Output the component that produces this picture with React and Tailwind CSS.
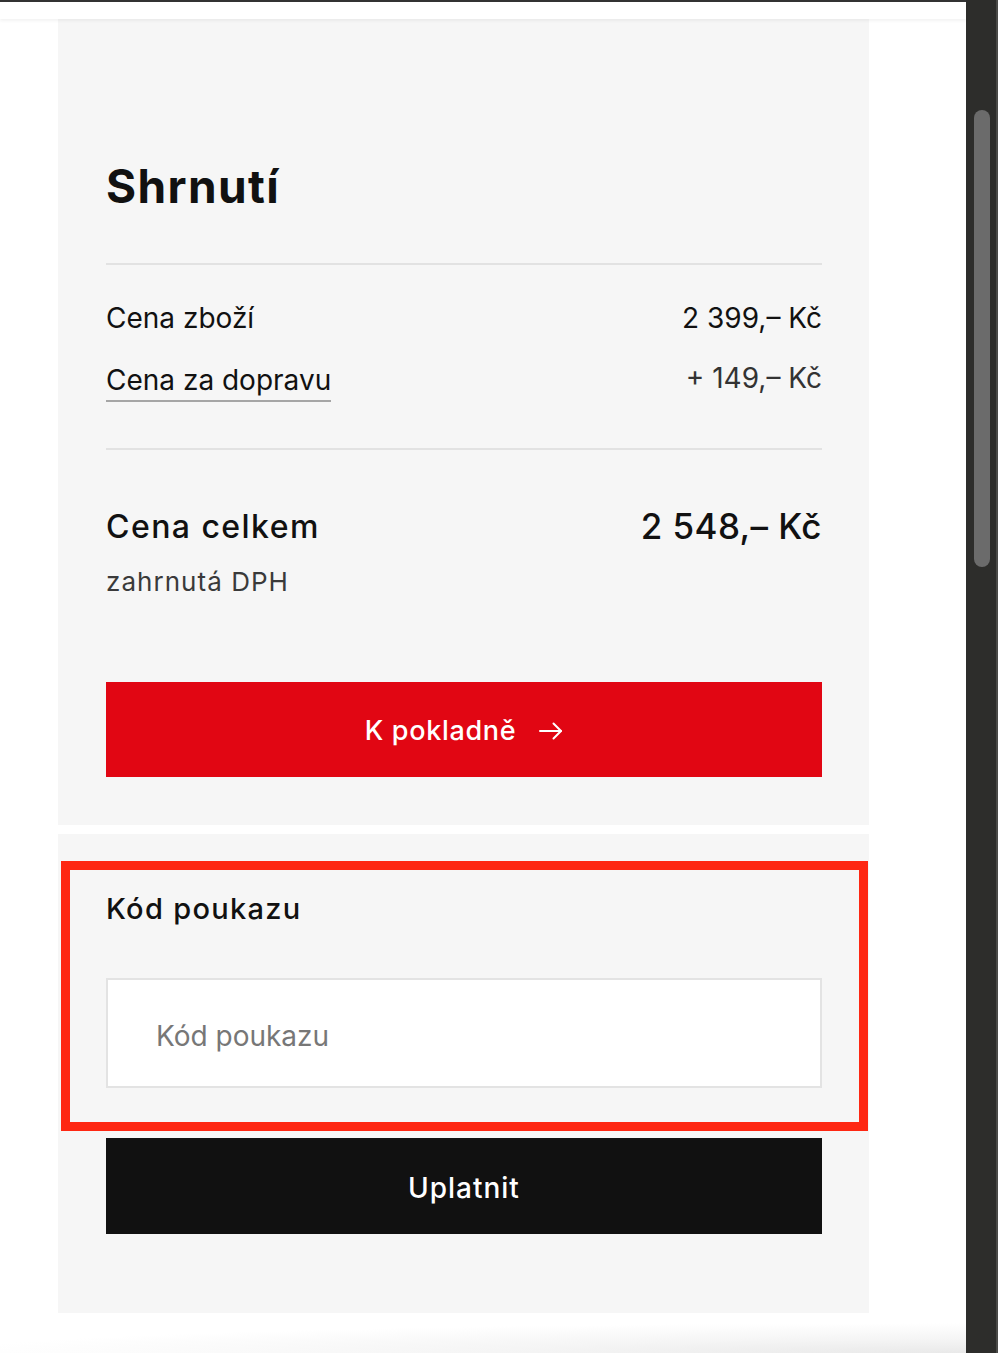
import React from "react";

function Arrow() {
  return (
    <svg width="24" height="18" viewBox="0 0 24 18" fill="none" stroke="currentColor" strokeWidth="2" strokeLinecap="round" strokeLinejoin="round">
      <path d="M1 9H22" />
      <path d="M14.5 1.5L22 9L14.5 16.5" />
    </svg>
  );
}

export default function App() {
  return (
    <div className="flex h-[1353px] w-full overflow-hidden bg-white font-['Inter',sans-serif] text-[#111]">
      <div className="flex min-w-0 flex-1 flex-col">
        <div className="h-[2px] shrink-0 bg-[#333]" />
        <div className="relative z-10 h-[17px] shrink-0 bg-white shadow-[0_2px_3px_rgba(0,0,0,0.05)]" />

        <section className="ml-[58px] w-[811px] shrink-0 bg-[#f6f6f6] pb-[48px] pl-[48px] pr-[47px] pt-[139px]">
          <h1 className="text-[46px] font-bold leading-[56px] tracking-[0.03em]">Shrnutí</h1>
          <div className="mt-[49px] h-[2px] bg-[#e2e2e2]" />

          <div className="mt-[35px] flex items-start justify-between text-[28px] leading-[36px]">
            <span>Cena zboží</span>
            <span>2 399,– Kč</span>
          </div>
          <div className="mt-[26px] flex items-start justify-between text-[28px] leading-[36px]">
            <span className="inline-block border-b-2 border-[#a6a6a6] pb-[2px]">Cena za dopravu</span>
            <span className="-mt-[2px] text-[#333]">+ 149,– Kč</span>
          </div>

          <div className="mt-[46px] h-[2px] bg-[#e2e2e2]" />

          <div className="mt-[57px] flex items-start justify-between leading-[40px]">
            <span className="text-[32px] font-medium tracking-[0.045em]">Cena celkem</span>
            <span className="-mt-[1px] text-[35px] font-medium tracking-[0.012em]">2 548,– Kč</span>
          </div>
          <div className="mt-[19px] text-[26px] leading-[32px] tracking-[0.04em] text-[#3a3a3a]">zahrnutá DPH</div>

          <button className="mt-[84px] flex h-[95px] w-full items-center justify-center gap-[23px] bg-[#e10613] pt-[3px] text-[27px] font-medium text-white">
            <span className="tracking-[0.025em]">K pokladně</span>
            <Arrow />
          </button>
        </section>

        <section className="relative ml-[58px] mt-[9px] w-[811px] shrink-0 bg-[#f6f6f6] pb-[79px] pl-[48px] pr-[47px] pt-[57px]">
          <h2 className="text-[29px] font-medium leading-[36px] tracking-[0.045em]">Kód poukazu</h2>
          <input
            placeholder="Kód poukazu"
            className="mt-[51px] block h-[110px] w-full border-2 border-[#e3e3e3] bg-white pl-[48px] pt-[6px] text-[28px] text-[#111] outline-none placeholder:text-[#777]"
          />
          <button className="mt-[50px] flex h-[96px] w-full items-center justify-center bg-[#111] pt-[3px] text-[28px] font-medium tracking-[0.035em] text-white">
            Uplatnit
          </button>
          <div className="pointer-events-none absolute left-[3px] top-[27px] h-[270px] w-[807px] border-[9px] border-[#fe2712]" />
        </section>

        <div className="flex-1 bg-[radial-gradient(140%_100%_at_100%_100%,#e9e9e9_0%,#f5f5f5_35%,#ffffff_75%)]" />
      </div>

      <div className="flex w-[32px] shrink-0 bg-[#2d2d2b]">
        <div className="w-[30px] px-[8px] pt-[110px]">
          <div className="h-[457px] w-[16px] rounded-full bg-[#6b6b6b]" />
        </div>
        <div className="w-[2px] bg-[#4a4a48]" />
      </div>
    </div>
  );
}
